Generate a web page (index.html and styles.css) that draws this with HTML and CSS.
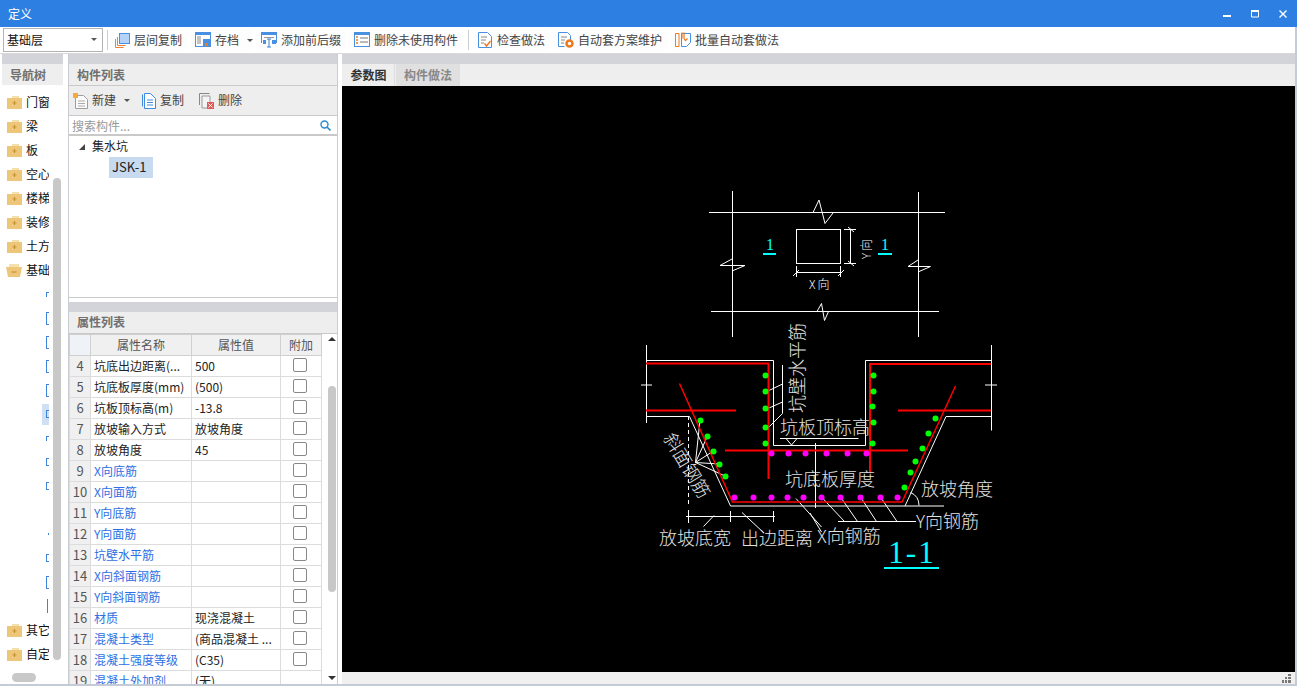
FILE: index.html
```html
<!DOCTYPE html>
<html lang="zh-CN">
<head>
<meta charset="utf-8">
<title>定义</title>
<link rel="stylesheet" href="styles.css">
</head>
<body>
<div class="win">
  <header class="titlebar">
    <span class="title">定义</span>
    <div class="winbtns">
      <svg width="8" height="8" viewBox="0 0 8 8"><rect y="5" width="8" height="2" fill="#fff"/></svg>
      <svg width="8" height="8" viewBox="0 0 8 8"><path d="M.5 1.5h7v5.5h-7z" fill="none" stroke="#fff"/><rect width="8" height="2" fill="#fff"/></svg>
      <svg width="8" height="8" viewBox="0 0 8 8"><path d="M.5.5l7 7M7.5.5l-7 7" stroke="#fff" stroke-width="1.4"/></svg>
    </div>
  </header>

  <div class="toolbar">
    <div class="combo"><span>基础层</span><i class="caret"></i></div>
    <i class="tsep"></i>
    <div class="tbtn">
      <svg width="16" height="16" viewBox="0 0 16 16"><rect x="5.5" y="1.5" width="10" height="10" fill="#b5d3f8" stroke="#4a90e0"/><path d="M3.5 5v8.5h8M1.5 7v8.5h8" fill="none" stroke="#e8843a"/></svg>
      <span>层间复制</span>
    </div>
    <div class="tbtn tbtn-drop">
      <svg width="16" height="16" viewBox="0 0 16 16"><rect x=".5" y=".5" width="15" height="14" fill="#fff" stroke="#4a90e0"/><rect width="16" height="3" fill="#4a90e0"/><path d="M2 5h4M2 7h4M2 9h4M2 11h4" stroke="#888"/><rect x="8" y="7" width="7" height="8" fill="#4a90e0"/><rect x="10" y="11" width="3" height="3" fill="#f07a20"/></svg>
      <span>存档</span><i class="caret caret-drop"></i>
    </div>
    <div class="tbtn">
      <svg width="16" height="16" viewBox="0 0 16 16"><path d="M.5 11V.5h15V11" fill="none" stroke="#4a90e0"/><rect width="16" height="3" fill="#4a90e0"/><path d="M3 5.5h10" stroke="#999"/><rect x="2" y="8" width="3" height="4" fill="#4a90e0"/><rect x="11" y="8" width="4" height="4" fill="#4a90e0"/><path d="M8 7v8M6 7h4M6 15h4" stroke="#3a80d0"/></svg>
      <span>添加前后缀</span>
    </div>
    <div class="tbtn">
      <svg width="16" height="16" viewBox="0 0 16 16"><rect x=".5" y=".5" width="15" height="14" fill="#fff" stroke="#4a90e0"/><rect width="16" height="3" fill="#4a90e0"/><path d="M2 5h2M2 8h2M2 11h2" stroke="#f07a20" stroke-width="1.5"/><path d="M6 6h8M6 10h8" stroke="#777"/></svg>
      <span>删除未使用构件</span>
    </div>
    <i class="tsep tsep2"></i>
    <div class="tbtn tbtn-narrow">
      <svg width="14" height="16" viewBox="0 0 14 16"><path d="M.5.5h9l4 4v11H.5z" fill="#fff" stroke="#4a90e0"/><path d="M3 5h6M3 8h5M3 11h3" stroke="#888"/><path d="M6.500 11.500l2 2.500 4-5" fill="none" stroke="#ee7a2a" stroke-width="1.500"/></svg>
      <span>检查做法</span>
    </div>
    <div class="tbtn">
      <svg width="16" height="16" viewBox="0 0 16 16"><path d="M.5.5h9l3 3v5M.5.500v14h6" fill="none" stroke="#4a90e0"/><path d="M3 5h6M3 8h4M3 11h3" stroke="#888"/><circle cx="11.500" cy="11.500" r="3" fill="none" stroke="#ee7a20" stroke-width="2.500"/></svg>
      <span>自动套方案维护</span>
    </div>
    <div class="tbtn">
      <svg width="16" height="16" viewBox="0 0 16 16"><path d="M.5 1.500h3.500v13H.5z" fill="#fff" stroke="#ee7a20"/><path d="M6.500 1.500h9v9l-4 4h-5z" fill="#fff" stroke="#4a90e0"/><path d="M7 .5v6M9 .5v6l1.500 2 2-2" fill="none" stroke="#ee7a20" stroke-width="1.200"/></svg>
      <span>批量自动套做法</span>
    </div>
  </div>

  <main class="body">
    <aside class="nav">
      <div class="strip"></div>
      <div class="phead nav-head">导航树</div>
      <div class="nav-tree">
        <div class="nrow"><svg class="fold" width="15" height="13" viewBox="0 0 15 13"><path d="M5 0h7v2H5z" fill="#f6dfae"/><rect y="2" width="15" height="11" fill="#eec67a"/><path d="M7.500 5v4M5.500 7h4" stroke="#c79431" stroke-width="1.200"/></svg><span>门窗</span></div>
        <div class="nrow"><svg class="fold" width="15" height="13" viewBox="0 0 15 13"><path d="M5 0h7v2H5z" fill="#f6dfae"/><rect y="2" width="15" height="11" fill="#eec67a"/><path d="M7.500 5v4M5.500 7h4" stroke="#c79431" stroke-width="1.200"/></svg><span>梁</span></div>
        <div class="nrow"><svg class="fold" width="15" height="13" viewBox="0 0 15 13"><path d="M5 0h7v2H5z" fill="#f6dfae"/><rect y="2" width="15" height="11" fill="#eec67a"/><path d="M7.500 5v4M5.500 7h4" stroke="#c79431" stroke-width="1.200"/></svg><span>板</span></div>
        <div class="nrow"><svg class="fold" width="15" height="13" viewBox="0 0 15 13"><path d="M5 0h7v2H5z" fill="#f6dfae"/><rect y="2" width="15" height="11" fill="#eec67a"/><path d="M7.500 5v4M5.500 7h4" stroke="#c79431" stroke-width="1.200"/></svg><span>空心</span></div>
        <div class="nrow"><svg class="fold" width="15" height="13" viewBox="0 0 15 13"><path d="M5 0h7v2H5z" fill="#f6dfae"/><rect y="2" width="15" height="11" fill="#eec67a"/><path d="M7.500 5v4M5.500 7h4" stroke="#c79431" stroke-width="1.200"/></svg><span>楼梯</span></div>
        <div class="nrow"><svg class="fold" width="15" height="13" viewBox="0 0 15 13"><path d="M5 0h7v2H5z" fill="#f6dfae"/><rect y="2" width="15" height="11" fill="#eec67a"/><path d="M7.500 5v4M5.500 7h4" stroke="#c79431" stroke-width="1.200"/></svg><span>装修</span></div>
        <div class="nrow"><svg class="fold" width="15" height="13" viewBox="0 0 15 13"><path d="M5 0h7v2H5z" fill="#f6dfae"/><rect y="2" width="15" height="11" fill="#eec67a"/><path d="M7.500 5v4M5.500 7h4" stroke="#c79431" stroke-width="1.200"/></svg><span>土方</span></div>
        <div class="nrow nrow-open"><svg class="fold" width="16" height="13" viewBox="0 0 16 13"><path d="M3 0h10v3H3z" fill="#f6dfae"/><path d="M0 3h16l-2 10H2z" fill="#eec67a"/><path d="M5.500 8h5" stroke="#c79431" stroke-width="1.200"/></svg><span>基础</span></div>
        <div class="nrow frow"><i class="frag frag-s"></i></div>
        <div class="nrow frow"><i class="frag frag-l"></i></div>
        <div class="nrow frow"><i class="frag frag-l"></i></div>
        <div class="nrow frow"><i class="frag frag-l"></i></div>
        <div class="nrow frow"><i class="frag frag-l"></i></div>
        <div class="nrow frow frow-sel"><i class="frag frag-m"></i></div>
        <div class="nrow frow"><i class="frag frag-s"></i></div>
        <div class="nrow frow"><i class="frag frag-m"></i></div>
        <div class="nrow frow"><i class="frag frag-m"></i></div>
        <div class="nrow frow"></div>
        <div class="nrow frow"><i class="frag frag-d"></i></div>
        <div class="nrow frow"><i class="frag frag-m"></i></div>
        <div class="nrow frow"><i class="frag frag-l"></i></div>
        <div class="nrow frow"><i class="frag frag-x"></i></div>
        <div class="nrow"><svg class="fold" width="15" height="13" viewBox="0 0 15 13"><path d="M5 0h7v2H5z" fill="#f6dfae"/><rect y="2" width="15" height="11" fill="#eec67a"/><path d="M7.500 5v4M5.500 7h4" stroke="#c79431" stroke-width="1.200"/></svg><span>其它</span></div>
        <div class="nrow"><svg class="fold" width="15" height="13" viewBox="0 0 15 13"><path d="M5 0h7v2H5z" fill="#f6dfae"/><rect y="2" width="15" height="11" fill="#eec67a"/><path d="M7.500 5v4M5.500 7h4" stroke="#c79431" stroke-width="1.200"/></svg><span>自定</span></div>
      </div>
      <i class="nav-vthumb"></i>
      <i class="nav-hthumb"></i>
    </aside>

    <section class="mid">
      <div class="strip"></div>
      <div class="phead">构件列表</div>
      <div class="ctools">
        <div class="cbtn">
          <svg width="15" height="16" viewBox="0 0 15 16"><path d="M2.500 2.500h8l4 4v9h-12z" fill="#fafafa" stroke="#9aa0a0"/><path d="M5 8h7M5 10.500h7M5 13h7" stroke="#aaa"/><rect width="5" height="5" fill="#f7a940"/></svg>
          <span>新建</span><i class="caret caret-new"></i>
        </div>
        <div class="cbtn cbtn-copy">
          <svg width="14" height="16" viewBox="0 0 14 16"><path d="M.5 1.500v12" stroke="#3f8be0" fill="none"/><path d="M2.500.5h6l5 5v10h-11z" fill="#fff" stroke="#3f8be0"/><path d="M5 7h6M5 9.500h6M5 12h6" stroke="#3f8be0"/></svg>
          <span>复制</span>
        </div>
        <div class="cbtn cbtn-del">
          <svg width="15" height="16" viewBox="0 0 15 16"><path d="M.5 12V.5h10" fill="none" stroke="#888"/><path d="M3 3h8v12H3z" fill="#f4f4f4" stroke="#999"/><rect x="8" y="9" width="7" height="7" fill="#e05a5a"/><path d="M9.500 10.500l4 4M13.500 10.500l-4 4" stroke="#fff"/></svg>
          <span>删除</span>
        </div>
      </div>
      <div class="search">
        <span>搜索构件...</span>
        <svg width="11" height="11" viewBox="0 0 11 11"><circle cx="4.500" cy="4.500" r="3.500" fill="none" stroke="#2b8ad0" stroke-width="1.400"/><path d="M7 7l3.500 3.500" stroke="#2b8ad0" stroke-width="1.600"/></svg>
      </div>
      <div class="tree">
        <div class="troot"><i class="tarrow"></i><span>集水坑</span></div>
        <div class="tleaf">JSK-1</div>
      </div>
      <div class="mid-gap"></div>
      <div class="strip"></div>
      <div class="phead phead-attr">属性列表</div>
      <div class="props">
        <table class="ptable">
          <colgroup><col class="c0"><col class="c1"><col class="c2"><col class="c3"></colgroup>
          <thead><tr><th></th><th>属性名称</th><th>属性值</th><th>附加</th></tr></thead>
          <tbody>
            <tr><td class="idx">4</td><td>坑底出边距离(...</td><td>500</td><td class="chk"><i></i></td></tr>
            <tr><td class="idx">5</td><td>坑底板厚度(mm)</td><td>(500)</td><td class="chk"><i></i></td></tr>
            <tr><td class="idx">6</td><td>坑板顶标高(m)</td><td>-13.8</td><td class="chk"><i></i></td></tr>
            <tr><td class="idx">7</td><td>放坡输入方式</td><td>放坡角度</td><td class="chk"><i></i></td></tr>
            <tr><td class="idx">8</td><td>放坡角度</td><td>45</td><td class="chk"><i></i></td></tr>
            <tr><td class="idx">9</td><td class="lnk">X向底筋</td><td></td><td class="chk"><i></i></td></tr>
            <tr><td class="idx">10</td><td class="lnk">X向面筋</td><td></td><td class="chk"><i></i></td></tr>
            <tr><td class="idx">11</td><td class="lnk">Y向底筋</td><td></td><td class="chk"><i></i></td></tr>
            <tr><td class="idx">12</td><td class="lnk">Y向面筋</td><td></td><td class="chk"><i></i></td></tr>
            <tr><td class="idx">13</td><td class="lnk">坑壁水平筋</td><td></td><td class="chk"><i></i></td></tr>
            <tr><td class="idx">14</td><td class="lnk">X向斜面钢筋</td><td></td><td class="chk"><i></i></td></tr>
            <tr><td class="idx">15</td><td class="lnk">Y向斜面钢筋</td><td></td><td class="chk"><i></i></td></tr>
            <tr><td class="idx">16</td><td class="lnk">材质</td><td>现浇混凝土</td><td class="chk"><i></i></td></tr>
            <tr><td class="idx">17</td><td class="lnk">混凝土类型</td><td>(商品混凝土 ...</td><td class="chk"><i></i></td></tr>
            <tr><td class="idx">18</td><td class="lnk">混凝土强度等级</td><td>(C35)</td><td class="chk"><i></i></td></tr>
            <tr><td class="idx">19</td><td class="lnk">混凝土外加剂</td><td>(无)</td><td></td></tr>
          </tbody>
        </table>
        <div class="pscroll">
          <i class="arrow-up"></i>
          <i class="pthumb"></i>
          <i class="arrow-down"></i>
        </div>
      </div>
    </section>

    <section class="right">
      <div class="strip"></div>
      <div class="tabs">
        <div class="tab tab-on">参数图</div>
        <div class="tab">构件做法</div>
      </div>
      <div class="canvas">
        <svg class="cad" width="953" height="586" viewBox="342 86 953 586">
          <g class="w">
            <path d="M709 212.500H945M711 311.500H939M732.500 191V337M918.500 192V337"/>
            <path d="M813 212.500L819 200L825 223.500L833 213M817 311.500L821.500 303.500L824.500 320.500L828.500 311.500"/>
            <path d="M732 259L720 265.500H745L732 271M918 260L908 266.500H930.500L918 272"/>
            <rect x="796.500" y="229.500" width="44" height="34"/>
            <path d="M850.500 229V263M844 229.500H856M844 263.500H856M848 227L854 232M848 261L854 266"/>
            <path d="M796 272.500H841M796.500 266V277M840.500 266V277M793 276L799 270M838 276L844 270"/>
            <path d="M646.500 345V423M646 360.500H773.500V445.500H865.500V360.500H991M991.500 345V430.500"/>
            <path d="M646 416.500H689.500L730.500 506H944M905 506L946 416.500H991"/>
            <path d="M641 385H652M985 385H997M646.500 381V389M991.500 381V389"/>
            <path class="dash" d="M688.500 416V504"/>
            <path d="M688.500 510V523M686 516.500H775M730.500 511V522M773.500 511V522M703.500 526.500L714 515.500M742 512.500L764 533"/>
            <path d="M815.500 443V508M780 438.500H858.500M786 438.500L791.500 445L797 438.500"/>
            <path d="M769 390.500L782.500 384M769 408L782.500 402M782.500 365V413.500L769 427"/>
            <path d="M695.500 462.500L700 420M695.500 462.500L707.500 436M695.500 462.500L713.500 451M695.500 462.500L719 464M695.500 462.500L725 476"/>
            <path d="M838 521.500H916M821.500 497L844.500 521.500M840.500 497L857.500 521.500M860.500 497L876.500 521.500M880.500 497L897 521.500"/>
            <path d="M796 498.500L821.500 527M810 513L821.500 532"/>
            <path d="M910.500 492.500Q919 496 919 505.500"/>
          </g>
          <g class="r">
            <path d="M646 363.500H768.500V479M646 410.500H736M725 450.500H908M870 473V364H991M898 410.500H991"/>
            <path class="r1" d="M679.500 383.500L732.500 502H902L955.500 386"/>
          </g>
          <g class="g">
            <circle cx="765.500" cy="375.500" r="3"/><circle cx="765.500" cy="391.500" r="3"/><circle cx="765.500" cy="408.500" r="3"/><circle cx="765.500" cy="427.500" r="3"/><circle cx="765.500" cy="443.500" r="3"/>
            <circle cx="700.500" cy="420.500" r="3"/><circle cx="707.500" cy="436.500" r="3"/><circle cx="713.500" cy="451.500" r="3"/><circle cx="719.500" cy="464.500" r="3"/><circle cx="725.500" cy="476.500" r="3"/>
            <circle cx="873.500" cy="375.500" r="3"/><circle cx="873.500" cy="391.500" r="3"/><circle cx="872.500" cy="406.500" r="3"/><circle cx="873.500" cy="422.500" r="3"/><circle cx="872.500" cy="443.500" r="3"/>
            <circle cx="935.500" cy="418.500" r="3"/><circle cx="928.500" cy="433.500" r="3"/><circle cx="922.500" cy="448.500" r="3"/><circle cx="915.500" cy="461.500" r="3"/><circle cx="910.500" cy="472.500" r="3"/><circle cx="904.500" cy="487.500" r="3"/>
          </g>
          <g class="m">
            <circle cx="771.500" cy="453.500" r="3"/><circle cx="788.500" cy="453.500" r="3"/><circle cx="805.500" cy="453.500" r="3"/><circle cx="826.500" cy="453.500" r="3"/><circle cx="847.500" cy="453.500" r="3"/><circle cx="866.500" cy="453.500" r="3"/>
            <circle cx="734.500" cy="497.500" r="3"/><circle cx="753.500" cy="497.500" r="3"/><circle cx="771.500" cy="497.500" r="3"/><circle cx="787.500" cy="497.500" r="3"/><circle cx="803.500" cy="497.500" r="3"/><circle cx="821.500" cy="497.500" r="3"/><circle cx="840.500" cy="497.500" r="3"/><circle cx="860.500" cy="497.500" r="3"/><circle cx="880.500" cy="497.500" r="3"/><circle cx="897.500" cy="497.500" r="3"/>
          </g>
          <g class="c">
            <rect x="763" y="253" width="13" height="2"/>
            <rect x="878" y="253" width="14" height="2"/>
            <rect x="884" y="567" width="55" height="2"/>
            <text class="t-num" x="770" y="250" text-anchor="middle">1</text>
            <text class="t-num" x="885" y="250" text-anchor="middle">1</text>
            <text class="t-big" x="912" y="563" text-anchor="middle">1-1</text>
          </g>
          <g class="t">
            <text class="t-sm" x="809" y="289">X向</text>
            <text class="t-sm" transform="translate(871 259) rotate(-90)">Y向</text>
            <text transform="translate(804 413) rotate(-90)">坑壁水平筋</text>
            <text x="780" y="434">坑板顶标高</text>
            <text x="785" y="486">坑底板厚度</text>
            <text x="921" y="496">放坡角度</text>
            <text x="916" y="528">Y向钢筋</text>
            <text x="817" y="543">X向钢筋</text>
            <text x="659" y="545">放坡底宽</text>
            <text x="741" y="545">出边距离</text>
            <text transform="translate(663 438) rotate(59)">斜面钢筋</text>
          </g>
        </svg>
      </div>
      <div class="status">
        <svg width="9" height="9" viewBox="0 0 9 9"><path fill="#777" d="M6 0h3v2H6zM3 3h2v2H3zM6 3h3v2H6zM0 6h2v3H0zM3 6h2v3H3zM6 6h3v3H6z"/></svg>
      </div>
    </section>
  </main>
</div>
</body>
</html>
```
FILE: styles.css
```css
* { box-sizing: border-box; }
html, body { margin: 0; height: 100%; overflow: hidden; }
body {
  font-family: "Noto Sans CJK SC", "Noto Sans", sans-serif;
  font-size: 12px;
  color: #222;
  background: #fff;
}
i { display: block; font-style: normal; }
.win {
  width: 1297px; height: 686px;
  display: flex; flex-direction: column;
  border-right: 2px solid #c4cbd6;
  border-bottom: 2px solid #c4cbd6;
}
.titlebar {
  height: 27px; margin-right: -2px;
  background: #2d7fe1; color: #fff;
  display: flex; align-items: center; justify-content: space-between;
  padding: 0 10px 0 8px;
}
.title { line-height: 27px; }
.winbtns { display: flex; gap: 20px; }
.toolbar {
  height: 27px;
  display: flex; align-items: center; gap: 3px;
  padding: 0 0 0 3px;
  border-bottom: 1px solid #d8d8d8;
  color: #444;
}
.combo {
  width: 100px; height: 24px;
  border: 1px solid #b3b3b3;
  display: flex; align-items: center; justify-content: space-between;
  padding: 0 5px 2px 3px;
  color: #111;
}
.caret { width: 0; height: 0; border: 3px solid transparent; border-top: 3px solid #555; border-bottom: 0; }
.tsep { width: 1px; height: 20px; background: #ccc; margin: 0 -2px 0 1px; }
.tsep2 { margin: 0 1px 0 2px; }
.tbtn {
  height: 20px; padding: 0 5px;
  display: flex; align-items: center; gap: 4px;
  background: #fdfdfd; border-radius: 3px;
}
.tbtn span, .cbtn span, .nrow span, .troot span { padding-bottom: 2px; }
.tbtn-narrow { gap: 5px; }
.tbtn-drop { padding-right: 0; }
.caret-drop { margin-left: 4px; }
.body { flex: 1; min-height: 0; display: flex; padding-left: 2px; }
.strip { height: 10px; background: #d3d4d9; flex: none; }
.phead {
  height: 22px; flex: none;
  background: #eee; color: #707070; font-weight: 700;
  border-bottom: 1px solid #c9c9c9;
  padding-left: 8px; line-height: 21px;
}
.nav { width: 61px; position: relative; flex: none; }
.nav-head { border-bottom: 0; height: 21px; padding-left: 8px; }
.nav-tree { padding-top: 5px; }
.nrow {
  height: 24px; width: 47px; overflow: hidden;
  display: flex; align-items: center; gap: 4px;
  padding-left: 5px; white-space: nowrap; color: #111;
}
.nrow-open { padding-left: 4px; }
.fold { flex: none; }
.frow { justify-content: flex-end; padding: 0; gap: 0; }
.frow-sel { background: linear-gradient(#cfe0f5, #cfe0f5) right center / 7px 21px no-repeat; }
.frag { width: 3px; border-left: 1.5px solid #3d85d8; border-top: 1px solid #3d85d8; border-bottom: 1px solid #3d85d8; }
.frag-s { height: 5px; border-bottom: 0; }
.frag-m { height: 8px; }
.frag-l { height: 13px; }
.frag-d { height: 2px; border: 0; background: #3d85d8; width: 1.5px; }
.frag-x { height: 14px; border-top: 0; border-bottom: 0; width: 2px; }
.nav-vthumb {
  position: absolute; left: 51px; top: 124px;
  width: 8px; height: 482px; border-radius: 4px; background: #c8c8c8;
}
.nav-hthumb {
  position: absolute; left: 10px; top: 619px;
  width: 24px; height: 9px; border-radius: 5px; background: #c8c8c8;
}
.mid {
  width: 270px; margin-left: 5px; flex: none;
  display: flex; flex-direction: column;
  border-left: 1px solid #c9ccd0; border-right: 1px solid #c9ccd0;
}
.ctools {
  height: 30px; flex: none;
  background: #eee; border-bottom: 1px solid #c9c9c9;
  display: flex; align-items: center; padding-left: 4px;
  color: #444;
}
.cbtn { display: flex; align-items: center; gap: 4px; }
.caret-new { margin-left: 4px; }
.cbtn-copy { margin-left: 12px; gap: 4px; }
.cbtn-del { margin-left: 15px; gap: 4px; }
.search {
  height: 20px; flex: none;
  border-bottom: 2px solid #c9c9c9;
  display: flex; align-items: center; justify-content: space-between;
  padding: 0 6px 0 3px; color: #999;
}
.tree { flex: 1 0 0; min-height: 162px; border-bottom: 1px solid #c9c9c9; }
.troot { height: 21px; display: flex; align-items: center; gap: 7px; padding-left: 10px; color: #222; }
.tarrow { width: 0; height: 0; border-bottom: 6px solid #444; border-left: 6px solid transparent; }
.tleaf { margin-left: 40px; width: 44px; height: 21px; background: #c8daf0; line-height: 20px; padding-left: 3px; font-size: 13px; color: #222; }
.mid-gap { height: 4px; flex: none; background: #fff; }
.phead-attr { height: 22px; line-height: 20px; }
.props { height: 350px; flex: none; display: flex; overflow: hidden; }
.ptable { width: 252px; table-layout: fixed; border-collapse: collapse; flex: none; align-self: flex-start; }
.c0 { width: 21px; } .c1 { width: 101px; } .c2 { width: 89px; } .c3 { width: 41px; }
.ptable tr { height: 21px; }
.ptable th, .ptable td {
  border: 1px solid #dcdcdc; padding: 0 0 0 3px; line-height: 16px;
  font-weight: 400; white-space: nowrap; overflow: hidden; color: #222;
}
.ptable th { background: #f0f0f0; color: #555; text-align: center; padding: 0; border-color: #d0d0d0; }
.ptable th:first-child { background: #eff2f7; }
.ptable td.idx { background: #f0f0f0; color: #555; text-align: center; padding: 0; font-size: 13px; }
.ptable td.lnk { color: #2f6fe3; }
.chk i { width: 14px; height: 14px; border: 1px solid #888; border-radius: 2px; margin-left: 12px; }
.ptable td.chk { padding: 0 0 2px; }
.pscroll { flex: 1; display: flex; flex-direction: column; align-items: center; padding-left: 4px; }
.arrow-up, .arrow-down { width: 0; height: 0; border: 4px solid transparent; }
.arrow-up { border-bottom: 4px solid #333; border-top: 0; margin-top: 3px; }
.arrow-down { border-top: 4px solid #333; border-bottom: 0; margin-top: 84px; }
.pthumb { width: 8px; height: 206px; border-radius: 4px; background: #c8c8c8; margin-top: 45px; }
.right { flex: 1; min-width: 0; margin-left: 4px; display: flex; flex-direction: column; }
.tabs {
  height: 22px; flex: none; background: #eee;
  display: flex; padding-left: 1px;
}
.tab { width: 64px; background: #e0e0e0; color: #888; font-weight: 700; text-align: center; line-height: 21px; }
.tab-on { width: 52px; background: #eee; color: #333; border-right: 1px solid #dcdcdc; margin-right: 1px; }
.canvas { height: 586px; flex: none; background: #000; overflow: hidden; }
.cad { display: block; font-family: "Noto Sans CJK SC", sans-serif; }
.cad .w { fill: none; stroke: #fff; stroke-width: 1; }
.cad .dash { stroke-dasharray: 4 3; }
.cad .r { fill: none; stroke: #f00; stroke-width: 2; }
.cad .r .r1 { stroke-width: 1.500; }
.cad .g { fill: #0f0; }
.cad .m { fill: #f0f; }
.cad .c { fill: #0ff; font-family: "Liberation Serif", serif; }
.cad .t { fill: #e2e2e2; font-size: 18px; font-weight: 300; }
.cad .t .t-sm { font-size: 12px; letter-spacing: 2px; fill: #fff; }
.cad .t-num { font-size: 16px; }
.cad .t-big { font-size: 31px; letter-spacing: 2px; }
.status {
  flex: 1; background: #f0f0f0;
  display: flex; align-items: flex-end; justify-content: flex-end;
  padding: 0 4px 1px 0;
}
```
